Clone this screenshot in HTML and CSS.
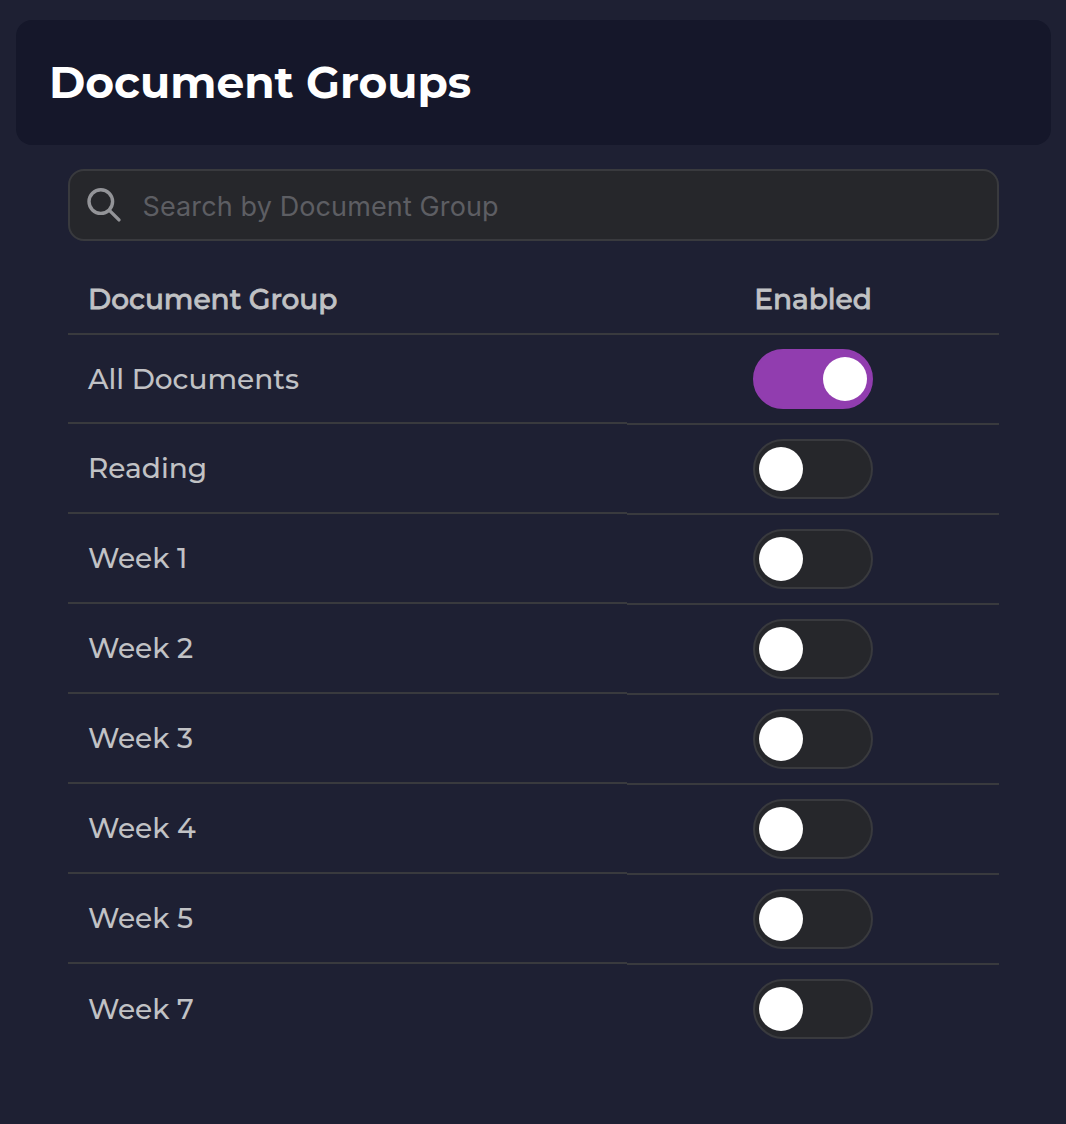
FILE: index.html
```html
<!DOCTYPE html>
<html lang="en">
<head>
<meta charset="utf-8">
<title>Document Groups</title>
<link rel="stylesheet" href="styles.css">
</head>
<body>
<main class="page">
  <header class="page-header"><h1 class="title">Document Groups</h1></header>
  <label class="search">
    <svg class="search-icon" width="36" height="36" viewBox="0 0 36 36" fill="none" stroke="currentColor" stroke-width="3.4" stroke-linecap="round"><circle cx="14.8" cy="14.6" r="11.8"/><path d="M23.4 23.4L33 32.9"/></svg>
    <input class="search-input" type="text" placeholder="Search by Document Group">
  </label>
  <section class="table">
    <div class="row head"><div class="cell name">Document Group</div><div class="cell state">Enabled</div></div>
    <div class="row first"><div class="cell name">All Documents</div><div class="cell state"><span class="toggle on"></span></div></div>
    <div class="row"><div class="cell name">Reading</div><div class="cell state"><span class="toggle"></span></div></div>
    <div class="row"><div class="cell name">Week 1</div><div class="cell state"><span class="toggle"></span></div></div>
    <div class="row"><div class="cell name">Week 2</div><div class="cell state"><span class="toggle"></span></div></div>
    <div class="row"><div class="cell name">Week 3</div><div class="cell state"><span class="toggle"></span></div></div>
    <div class="row"><div class="cell name">Week 4</div><div class="cell state"><span class="toggle"></span></div></div>
    <div class="row"><div class="cell name">Week 5</div><div class="cell state"><span class="toggle"></span></div></div>
    <div class="row"><div class="cell name">Week 7</div><div class="cell state"><span class="toggle"></span></div></div>
  </section>
</main>
</body>
</html>
```
FILE: styles.css
```css
* { box-sizing: border-box; }
body { margin: 0; background: #1e2033; color: #c1c2c5; font-family: Montserrat, Inter, sans-serif; }
.page { height: 1124px; padding: 20px 15px 0 16px; overflow: hidden; }
.page-header { height: 125px; padding: 0 33px 2px; display: flex; align-items: center; background: #15172a; border-radius: 16px; }
.title { margin: 0; color: #fff; font-size: 44px; line-height: 54px; font-weight: 700; letter-spacing: -0.05px; white-space: nowrap; }
.search { display: flex; align-items: center; width: 931px; height: 72px; margin: 24px 0 0 52px; padding: 0 16px; background: #26272b; border: 2px solid #393a3e; border-radius: 16px; }
.search-icon { color: #939498; flex: none; }
.search-input { flex: 1; height: 60px; margin-left: 20.5px; padding: 2px 0 0; border: 0; outline: 0; background: none; color: #c1c2c5; font: 400 27px Inter, sans-serif; letter-spacing: 0.12px; }
.search-input::placeholder { color: #5d5e63; opacity: 1; }
.table { width: 931px; margin: 24px 0 0 52px; }
.row { display: grid; grid-template-columns: 559px 372px; align-items: start; height: 90px; font-size: 28px; font-weight: 500; }
.cell { display: flex; align-items: center; height: 90px; border-bottom: 2px solid #393a3e; white-space: nowrap; }
.name { height: 89px; padding: 0 0 2px 20px; }
.first .name { padding-bottom: 0; }
.state { justify-content: center; }
.head { height: 70px; -webkit-text-stroke: 0.8px currentColor; }
.head .cell { height: 70px; padding-bottom: 0; }
.row:last-child .cell { border-bottom-color: transparent; }
.row:last-child .name { height: 91px; }
.toggle { display: flex; align-items: center; width: 120px; height: 60px; padding: 0 4px; background: #26272b; border: 2px solid #393a3e; border-radius: 30px; }
.toggle::before { content: ""; width: 44px; height: 44px; border-radius: 50%; background: #fff; }
.toggle.on { justify-content: flex-end; background: #913daf; border-color: #913daf; }
```
